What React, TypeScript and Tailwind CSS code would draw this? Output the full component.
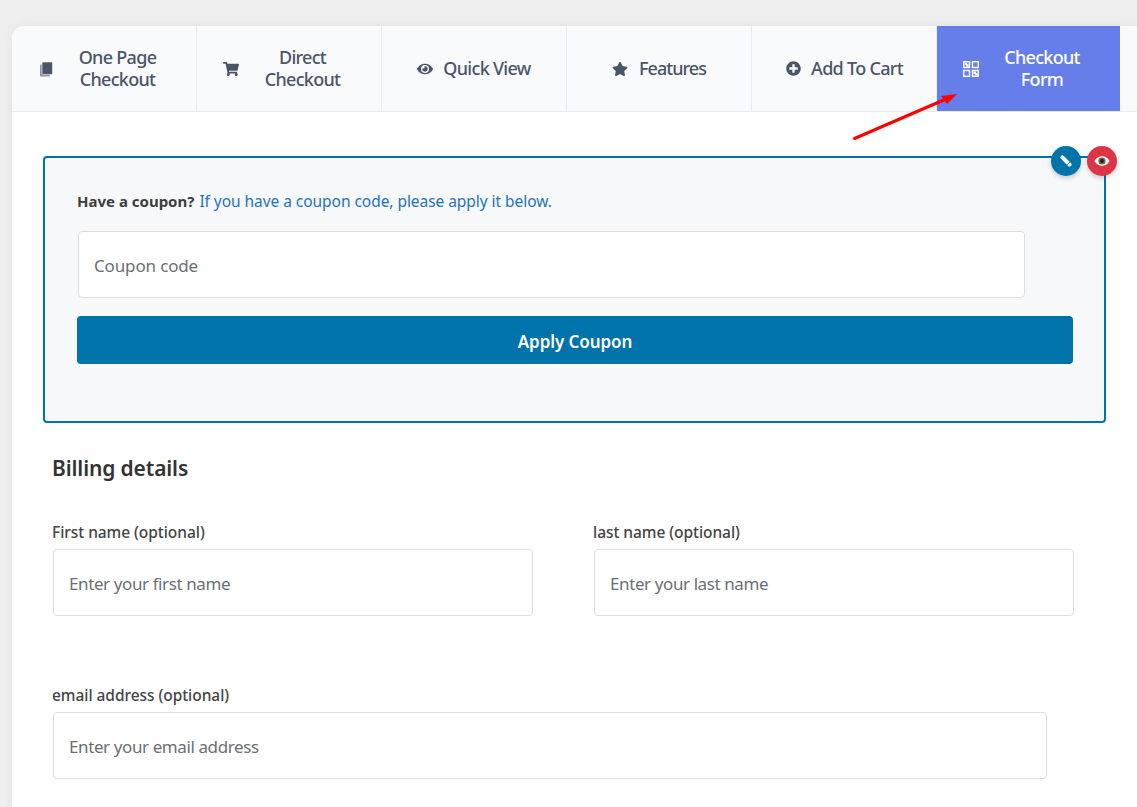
import { FaEye, FaPlusCircle, FaShoppingCart, FaStar } from 'react-icons/fa';
import type { ReactNode } from 'react';

function QrIcon() {
	return (
		<svg width="16" height="16" viewBox="0 0 16 16" fill="none" stroke="currentColor" strokeWidth="1.4" aria-hidden="true">
			<rect x="0.7" y="0.7" width="5.8" height="5.8" />
			<rect x="2.4" y="2.4" width="1" height="1" fill="currentColor" />
			<rect x="4" y="4" width="1" height="1" fill="currentColor" />
			<rect x="9.5" y="0.7" width="5.8" height="5.8" />
			<rect x="0.7" y="9.5" width="5.8" height="5.8" />
			<rect x="9.5" y="9.5" width="5.8" height="5.8" />
			<rect x="11.2" y="11.2" width="1" height="1" fill="currentColor" />
			<rect x="12.8" y="12.8" width="1" height="1" fill="currentColor" />
		</svg>
	);
}

function PagesIcon() {
	return (
		<svg width="14" height="16" viewBox="0 0 14 16" aria-hidden="true">
			<rect x="1" y="3.5" width="10" height="12" rx="1" fill="#8b95a5" />
			<rect x="3" y="1" width="10.5" height="12.5" rx="1" fill="#4a5568" stroke="#f8fafc" strokeWidth="0.6" />
		</svg>
	);
}

function PencilIcon() {
	return (
		<svg width="14" height="14" viewBox="0 0 14 14" aria-hidden="true">
			<line x1="3.4" y1="3.4" x2="10.6" y2="10.6" stroke="#fff" strokeWidth="4" strokeLinecap="round" />
			<line x1="7.9" y1="11" x2="11" y2="7.9" stroke="#0073aa" strokeWidth="0.8" />
		</svg>
	);
}

function BrownEyeIcon() {
	return (
		<svg width="16" height="10" viewBox="0 0 16 10" aria-hidden="true">
			<path d="M0.4 5 C3 1 5.5 0.2 8 0.2 C10.5 0.2 13 1 15.6 5 C13 9 10.5 9.8 8 9.8 C5.5 9.8 3 9 0.4 5 Z" fill="#fff" />
			<circle cx="8" cy="5" r="3.6" fill="#7a5a48" />
			<circle cx="8" cy="5" r="1.9" fill="#2b1f1a" />
		</svg>
	);
}

const TABS: { label: ReactNode; icon: ReactNode; wrap?: boolean; active?: boolean; tight?: boolean; width: string }[] = [
	{ label: <>One Page<br />Checkout</>, icon: <PagesIcon />, wrap: true, width: 'w-[185px]' },
	{ label: <>Direct<br />Checkout</>, icon: <FaShoppingCart size={16} />, wrap: true, width: 'w-[185px]' },
	{ label: 'Quick View', icon: <FaEye size={16} />, width: 'w-[185px]' },
	{ label: 'Features', icon: <FaStar size={16} />, tight: true, width: 'w-[185px]' },
	{ label: 'Add To Cart', icon: <FaPlusCircle size={15} />, width: 'w-[185px]' },
	{ label: <>Checkout<br />Form</>, icon: <QrIcon />, wrap: true, active: true, width: 'w-[183px]' },
];

function Tab({ tab }: { tab: (typeof TABS)[number] }) {
	const tone = tab.active ? 'bg-[#667eea] text-white' : 'border-r border-[#e9ecef] text-[#4a5568]';
	return (
		<div className={`${tab.width} ${tone} flex h-[85px] shrink-0 items-center ${tab.wrap ? 'pl-[26px] pr-[26px]' : 'justify-center'}`}>
			<span className="flex w-4 shrink-0 justify-center">{tab.icon}</span>
			<span
				className={`-mt-[2px] text-[18px] leading-[22px] font-medium ${tab.tight ? 'tracking-[-0.95px]' : 'tracking-[-0.7px]'} ${
					tab.wrap ? 'ml-[11px] flex-1 text-center' : tab.tight ? 'ml-[11px]' : 'ml-[10px]'
				}`}
			>
				{tab.label}
			</span>
		</div>
	);
}

function Field({ label, placeholder, className }: { label: string; placeholder: string; className: string }) {
	return (
		<div className={className}>
			<div className="-ml-px mb-[7px] text-[15.5px] leading-[20px] font-medium tracking-[-0.05px] text-[#444]">{label}</div>
			<div className="flex h-[67px] items-center rounded border border-[#ddd] bg-white px-[15px] pt-[3px] text-[17px] tracking-[-0.4px] text-[#6a6f75]">
				{placeholder}
			</div>
		</div>
	);
}

export default function App() {
	return (
		<div className="h-[807px] w-[1137px] overflow-hidden bg-[#efefef] pt-[26px] pl-[12px] font-['Noto_Sans','Open_Sans',sans-serif]">
			<div className="relative h-[800px] w-[1125px] rounded-tl-xl bg-white shadow-[0_0_12px_rgba(0,0,0,0.06)]">
				<div className="flex h-[86px] overflow-hidden rounded-tl-xl border-b border-[#e9ecef] bg-[#f8fafc]">
					{TABS.map((tab, i) => (
						<Tab key={i} tab={tab} />
					))}
				</div>

				<svg className="absolute top-[60px] left-[838px]" width="112" height="60" viewBox="0 0 112 60" aria-hidden="true">
					<line x1="4.5" y1="52.5" x2="96" y2="13" stroke="#ff0000" strokeWidth="3" strokeLinecap="round" />
					<polygon points="107,8 91,10 97,18" fill="#ff0000" />
				</svg>

				<div className="relative mt-[44px] ml-[31px] h-[267px] w-[1063px] rounded border-2 border-[#0073aa] bg-[#f7f8fa] pt-[32px] pl-[32px]">
					<div className="flex h-[22px] items-baseline text-[15.5px]">
						<span className="text-[15px] font-bold text-[#3d3d3d]">Have a coupon?</span>
						<span className="ml-[5px] tracking-[-0.05px] text-[#1e73be]">If you have a coupon code, please apply it below.</span>
					</div>
					<div className="mt-[19px] ml-px flex h-[67px] w-[947px] items-center rounded border border-[#ddd] bg-white px-[15px] pt-[2px] text-[17px] tracking-[-0.15px] text-[#6a6f75]">
						Coupon code
					</div>
					<div className="mt-[18px] flex h-[48px] w-[996px] items-center justify-center rounded bg-[#0073aa] pt-1 text-[17px] font-semibold tracking-[-0.07px] text-white">
						Apply Coupon
					</div>
					<div className="absolute -top-[12px] left-[1006px] flex h-[30px] w-[30px] items-center justify-center rounded-full bg-[#0073aa] shadow-[0_2px_5px_rgba(0,0,0,0.2)]">
						<PencilIcon />
					</div>
					<div className="absolute -top-[12px] left-[1042px] flex h-[30px] w-[30px] items-center justify-center rounded-full bg-[#dc3545] shadow-[0_2px_5px_rgba(0,0,0,0.2)]">
						<BrownEyeIcon />
					</div>
				</div>

				<div className="mt-[30px] ml-[40px] text-[21px] leading-[30px] font-semibold tracking-[-0.13px] text-[#333]">Billing details</div>

				<div className="mt-[39px] ml-[41px] flex">
					<Field className="w-[480px]" label="First name (optional)" placeholder="Enter your first name" />
					<Field className="ml-[61px] w-[480px]" label="last name (optional)" placeholder="Enter your last name" />
				</div>
				<Field className="mt-[69px] ml-[41px] w-[994px]" label="email address (optional)" placeholder="Enter your email address" />
			</div>
		</div>
	);
}
